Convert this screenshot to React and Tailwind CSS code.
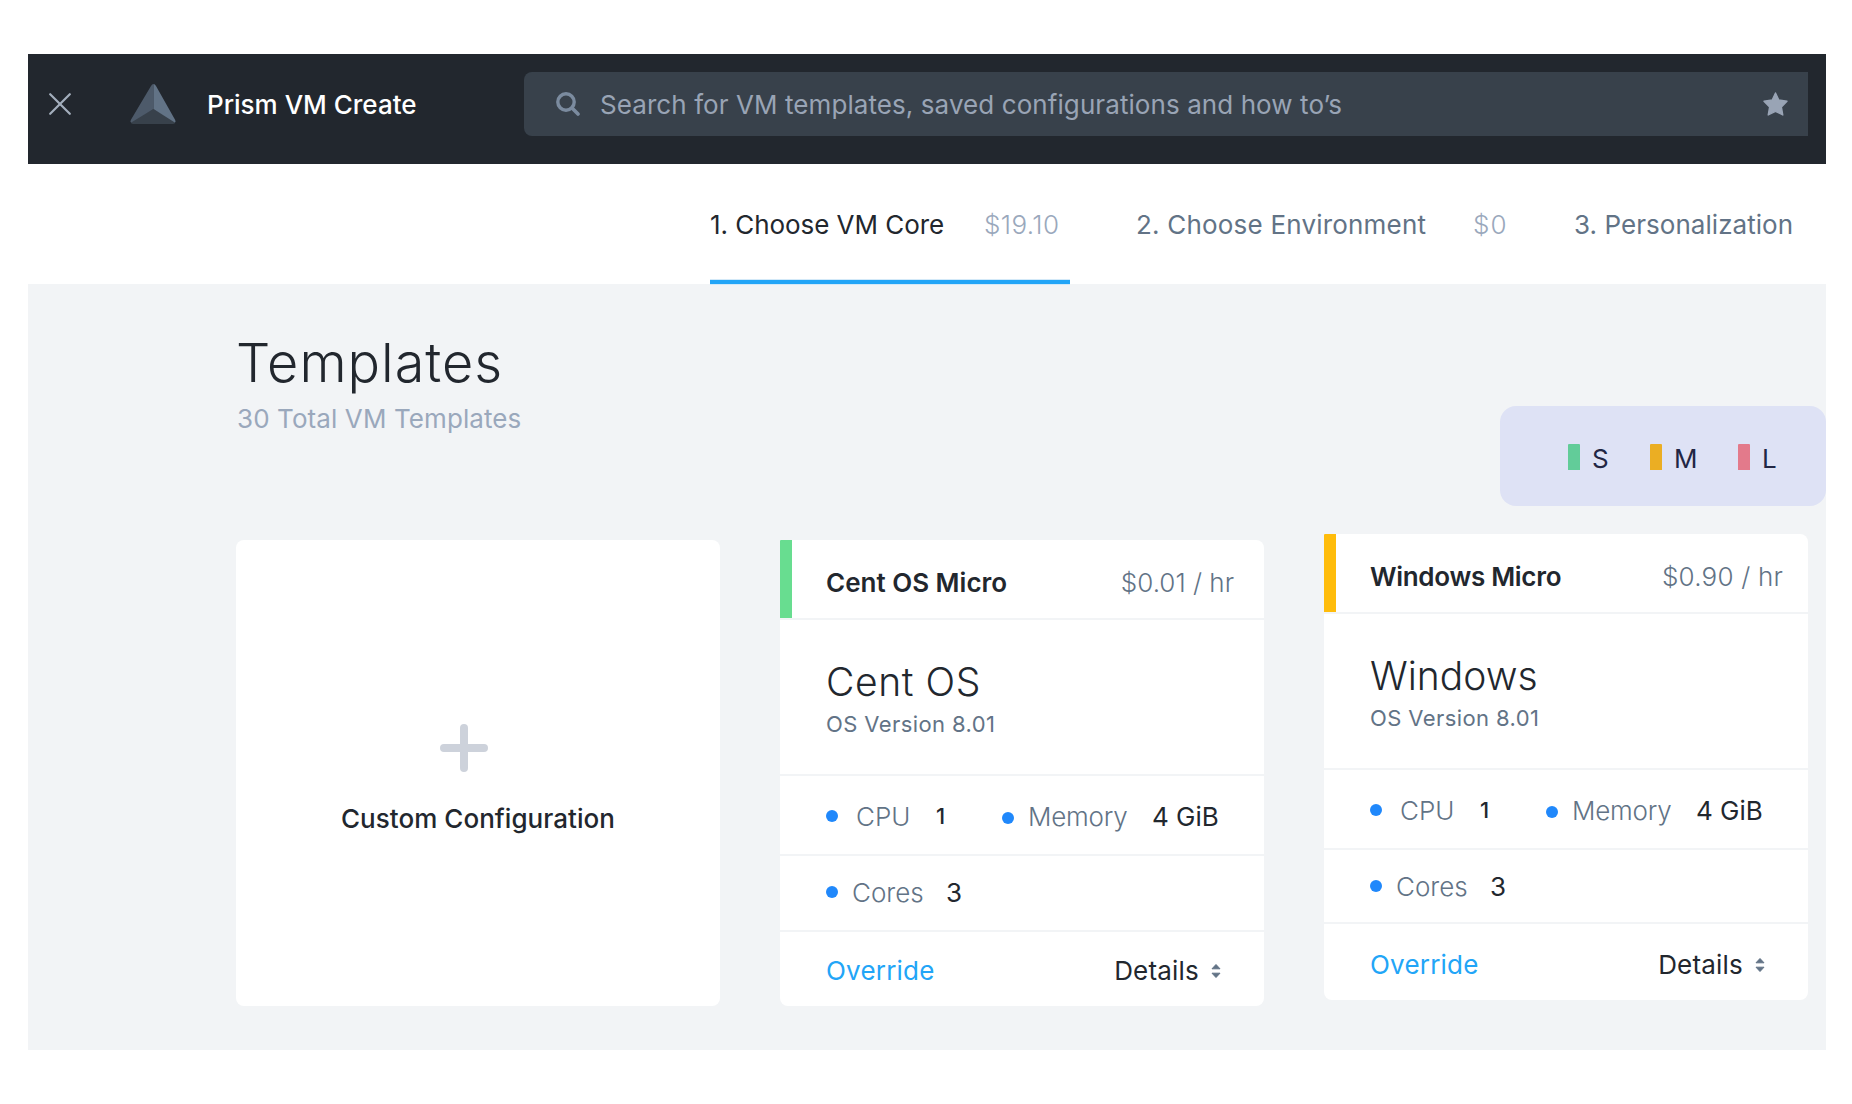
import React from "react";

function CloseIcon() {
  return (
    <svg className="h-[22px] w-[22px]" viewBox="0 0 22 22" fill="none" stroke="#a3aebc" strokeWidth="2.2" strokeLinecap="round">
      <path d="M1.2 1.2 20.8 20.8M20.8 1.2 1.2 20.8" />
    </svg>
  );
}

function Logo() {
  return (
    <svg className="h-10 w-[46px]" viewBox="0 0 46 40">
      <path d="M23.5 25 0.5 37.5Q1 40 3 40H43Q45 40 45.5 37.5Z" fill="#38414b" />
      <path d="M23.5 0Q22 0 21 2L0.8 36Q0 38 1.2 38.6L23.5 25Z" fill="#4d5a6a" />
      <path d="M23.5 0Q25 0 26 2L45.2 36Q46 38 44.8 38.6L23.5 25Z" fill="#627386" />
    </svg>
  );
}

function SearchIcon() {
  return (
    <svg className="h-6 w-6" viewBox="0 0 24 24" fill="none" stroke="#7b8b9f" strokeLinecap="round">
      <circle cx="10" cy="10" r="8.2" strokeWidth="3.4" />
      <path d="m16 16 6 6" strokeWidth="3.6" />
    </svg>
  );
}

function StarIcon() {
  return (
    <svg className="h-6 w-[25px]" viewBox="0 0 25 24" fill="#99a4b5" stroke="#99a4b5" strokeWidth="1.4" strokeLinejoin="round">
      <path d="m12.500 1 3.300 7 8.200 1.200-5.600 5.800 1.400 8-7.300-3.700L5.200 23l1.400-8L1 9.200 9.200 8z" />
    </svg>
  );
}

function SortIcon() {
  return (
    <svg className="h-4 w-[10px]" viewBox="0 0 10 16" fill="#627386" stroke="#627386" strokeWidth="1" strokeLinejoin="round">
      <path d="M5 1.500 9 5.800H1z" />
      <path d="M5 14.500 9 10.200H1z" />
    </svg>
  );
}

function Dot({ className = "" }) {
  return <span className={`size-3 shrink-0 rounded-full bg-[#2088fb] ${className}`} />;
}

function Header() {
  return (
    <header className="flex h-[110px] items-start bg-[#22272e] pt-[18px] pr-[18px] pl-[21px]">
      <div className="flex h-16 w-[475px] shrink-0 items-center">
        <CloseIcon />
        <span className="ml-[59px]">
          <Logo />
        </span>
        <h1 className="ml-[31px] pt-[2px] font-medium text-white">Prism VM Create</h1>
      </div>
      <div className="flex h-16 flex-1 items-center rounded-l-lg bg-[#38414b] pr-5 pl-8">
        <SearchIcon />
        <span className="ml-5 flex-1 pt-[2px] tracking-[0.08px] text-[#99a4b5]">
          Search for VM templates, saved configurations and how to’s
        </span>
        <StarIcon />
      </div>
    </header>
  );
}

function Steps() {
  return (
    <nav className="flex h-[120px] items-stretch bg-white pl-[682px] text-[#627386]">
      <div className="relative flex w-[360px] items-center pt-[2px] text-[#22272e]">
        <span className="w-[274px] tracking-[-0.05px]">1. Choose VM Core</span>
        <span className="font-[350] tracking-[0.4px] text-[#9aa8bc]">$19.10</span>
        <span className="absolute inset-x-0 -bottom-px h-[6px] border-y border-[#d3e9f8] bg-[#22a5f7]" />
      </div>
      <div className="ml-[66px] flex w-[438px] items-center pt-[2px]">
        <span className="w-[337px] tracking-[0.2px]">2. Choose Environment</span>
        <span className="font-[350] tracking-[1px] text-[#9aa8bc]">$0</span>
      </div>
      <div className="flex items-center pt-[2px] tracking-[0.05px]">3. Personalization</div>
    </nav>
  );
}

function Legend() {
  return (
    <div className="mt-[122px] flex h-[100px] w-[326px] items-center rounded-2xl bg-[#dee2f5] pl-[68px] text-[#222644]">
      <span className="mt-[2px] h-[26px] w-3 rounded-t-[1px] bg-[#62cc99]" />
      <span className="ml-3 w-[58px] pt-[5px]">S</span>
      <span className="mt-[2px] h-[26px] w-3 rounded-t-[1px] bg-[#ebae23]" />
      <span className="ml-3 w-16 pt-[5px]">M</span>
      <span className="mt-[2px] h-[26px] w-3 rounded-t-[1px] bg-[#e37a8b]" />
      <span className="ml-3 pt-[5px]">L</span>
    </div>
  );
}

function CustomCard() {
  return (
    <div className="mt-[6px] flex h-[466px] w-[484px] flex-col items-center rounded-lg bg-white pt-[184px]">
      <svg className="mr-7 size-12" viewBox="0 0 48 48" stroke="#cdd2db" strokeWidth="8" strokeLinecap="round">
        <path d="M24 4v40M4 24h40" />
      </svg>
      <span className="mt-[27px] leading-[40px] font-[550] tracking-[0.05px] text-[#22272e]">Custom Configuration</span>
    </div>
  );
}

function TemplateCard({ name, nameClass, price, priceClass, os, osClass, strip, outer, coresRow, footer }) {
  return (
    <div className={`h-[466px] w-[484px] overflow-hidden rounded-lg rounded-tl-[1px] bg-white text-[#22272e] ${outer}`}>
      <div className="flex h-20 border-b-2 border-[#f2f4f6]">
        <span className={`w-3 ${strip}`} />
        <div className="flex flex-1 items-center justify-between pt-[7px] pl-[34px]">
          <span className={`font-semibold ${nameClass}`}>{name}</span>
          <span className={`font-[350] text-[#627386] ${priceClass}`}>{price}</span>
        </div>
      </div>
      <div className="flex h-[156px] flex-col gap-1 border-b-2 border-[#f2f4f6] pt-[38px] pl-[46px]">
        <span className={`text-[39px] leading-[48px] font-[350] ${osClass}`}>{os}</span>
        <span className="text-[22px] leading-[28px] tracking-[0.4px] text-[#627386]">OS Version 8.01</span>
      </div>
      <div className="flex h-20 items-center border-b-2 border-[#f2f4f6] pt-[3px] pl-[46px]">
        <Dot className="-mt-[2px]" />
        <span className="ml-[18px] w-20 font-[350] text-[#627386]">CPU</span>
        <span className="-mt-[2px] w-[66px] text-[22px] font-medium">1</span>
        <Dot className="mt-[2px]" />
        <span className="ml-[14px] w-[124px] font-[350] tracking-[-0.2px] text-[#627386]">Memory</span>
        <span>4 GiB</span>
      </div>
      <div className={`flex items-center border-b-2 border-[#f2f4f6] pl-[46px] ${coresRow}`}>
        <Dot className="-mt-[2px]" />
        <span className="ml-[14px] w-[94px] font-[350] text-[#627386]">Cores</span>
        <span>3</span>
      </div>
      <div className={`flex items-center pl-[46px] ${footer}`}>
        <span className="flex-1 tracking-[0.2px] text-[#22a5f7]">Override</span>
        <span className="mr-3 tracking-[0.2px]">Details</span>
        <span className="mr-[43px]">
          <SortIcon />
        </span>
      </div>
    </div>
  );
}

export default function App() {
  return (
    <div className="h-[1104px] w-[1852px] bg-white pt-[54px] pl-7 font-['Inter','Open_Sans',sans-serif] text-[26px] leading-[30px] whitespace-nowrap">
      <div className="w-[1798px]">
        <Header />
        <Steps />
        <main className="h-[766px] bg-[#f2f4f6]">
          <div className="flex h-[250px] items-start justify-between pl-[209px]">
            <div className="pt-[47px]">
              <h2 className="-ml-px text-[54px] leading-[64px] font-light tracking-[1px] text-[#22272e]">Templates</h2>
              <p className="mt-[9px] tracking-[0.1px] text-[#9aa8bc]">30 Total VM Templates</p>
            </div>
            <Legend />
          </div>
          <div className="flex gap-[60px] pl-[208px]">
            <CustomCard />
            <TemplateCard
              name="Cent OS Micro"
              nameClass=""
              price="$0.01 / hr"
              priceClass="mr-[30px]"
              os="Cent OS"
              osClass="tracking-[0.6px]"
              strip="bg-[#68dd90]"
              outer="mt-[6px]"
              coresRow="h-[76px]"
              footer="h-[74px] pt-[3px]"
            />
            <TemplateCard
              name="Windows Micro"
              nameClass="tracking-[-0.3px]"
              price="$0.90 / hr"
              priceClass="mr-[25px] tracking-[0.2px]"
              os="Windows"
              osClass=""
              strip="bg-[#ffbc0b]"
              outer=""
              coresRow="h-[74px] pt-[1px]"
              footer="h-[76px] pt-[5px]"
            />
          </div>
        </main>
      </div>
    </div>
  );
}
